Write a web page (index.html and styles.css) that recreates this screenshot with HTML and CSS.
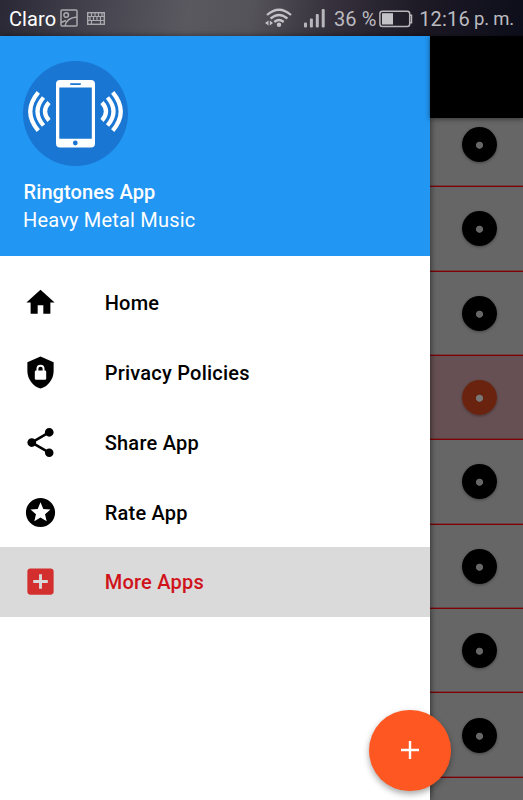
FILE: index.html
```html
<!DOCTYPE html>
<html lang="es">
<head>
<meta charset="utf-8">
<title>Ringtones App</title>
<link rel="stylesheet" href="styles.css">
</head>
<body>
<div class="phone">
  <header class="status">
    <span class="carrier">Claro</span>
    <svg class="ic-image" width="18" height="18" viewBox="0 0 18 18" fill="none" stroke="#aaa9ad" stroke-width="1.500"><rect x="1" y="1" width="16" height="16" rx="1"/><circle cx="6.200" cy="6" r="2.300"/><path d="M5 17C6 11.500 10 8.500 17 8M1 13.500l5-2"/></svg>
    <svg class="ic-keys" width="18" height="13" viewBox="0 0 18 13"><rect x=".7" y=".7" width="16.600" height="11.600" fill="none" stroke="#aaa9ad" stroke-width="1.400"/><path d="M4.500 1v3M8 1v3M11.500 1v3M15 1v3M3 4.500v3.500M6.500 4.500v3.500M10 4.500v3.500M13.500 4.500v3.500M4.500 8.500V12M13.500 8.500V12" stroke="#aaa9ad" stroke-width="1.200"/><path d="M1 4.500h16M1 8.500h16" stroke="#aaa9ad" stroke-width="1.100"/></svg>
    <svg class="ic-wifi" width="28" height="20" viewBox="0 0 28 20"><g fill="none" stroke="#c3c2c7" stroke-width="2.300"><path d="M3 7Q15 -3.500 27 7"/><path d="M6.600 10.500Q15 3.500 23.400 10.500"/><path d="M10.300 14Q15 10 19.700 14"/></g><circle cx="15" cy="16.700" r="2.200" fill="#c3c2c7"/><path d="M4.500 12.500v5L1 15zM5.800 12.500v5l3.200-2.500z" fill="#c3c2c7"/></svg>
    <svg class="ic-signal" width="21" height="19" viewBox="0 0 21 19" fill="#b7b6bb"><rect x="0" y="13.500" width="3" height="5" rx="1"/><rect x="5.900" y="9.500" width="3" height="9" rx="1"/><rect x="11.800" y="5" width="3" height="13.500" rx="1"/><rect x="17.700" y="0" width="3" height="18.500" rx="1"/></svg>
    <span class="percent">36 %</span>
    <svg class="ic-battery" width="34" height="18" viewBox="0 0 34 18"><rect x=".9" y="1.200" width="29.800" height="15.300" rx="2.500" fill="none" stroke="#b7b6bb" stroke-width="1.500"/><rect x="3" y="3.200" width="11" height="11.300" fill="#c3c2c7"/><path d="M31 5.200h1.500v7.500H31" fill="none" stroke="#b7b6bb" stroke-width="1.500"/></svg>
    <span class="clock">12:16</span><span class="ampm">p. m.</span>
  </header>
  <div class="body">
    <nav class="drawer">
      <div class="profile">
        <svg class="logo" width="105" height="105" viewBox="0 0 105 105"><circle cx="52.500" cy="52.500" r="52.500" fill="#1976d2"/><path fill="#fff" fill-rule="evenodd" d="M37 19h31q4 0 4 4v59.500q0 4-4 4H37q-4 0-4-4V23q0-4 4-4zM36.300 26.500v51.300h32.500V26.500z"/><rect x="47" y="22.200" width="11" height="1.700" rx=".8" fill="#1976d2"/><circle cx="52.300" cy="82" r="2.400" fill="#1976d2"/><g fill="none" stroke="#fff" stroke-width="4.200"><path d="M26 41.500Q18 50.500 26 59.500M20.500 36.500Q8.500 50.500 20.500 64.500M15.300 31.300Q-.8 50.500 15.300 69.700"/><path d="M79 41.500Q87 50.500 79 59.500M84.500 36.500Q96.500 50.500 84.500 64.500M89.700 31.300Q105.800 50.500 89.700 69.700"/></g></svg>
        <div class="app-name">Ringtones App</div>
        <div class="app-sub">Heavy Metal Music</div>
      </div>
      <ul class="menu">
        <li class="item"><svg viewBox="-.4 -.4 24.800 24.800"><path d="M10 20v-6h4v6h5v-8h3L12 3 2 12h3v8z"/></svg><span>Home</span></li>
        <li class="item"><svg viewBox="0 0 24 24"><path d="M12 1L3 5v6c0 5.550 3.840 10.740 9 12 5.160-1.260 9-6.450 9-12V5l-9-4z"/><rect x="8.100" y="10.600" width="7.800" height="6.400" rx=".9" fill="#fff"/><path d="M9.900 11V9.500a2.100 2.100 0 0 1 4.200 0V11" fill="none" stroke="#fff" stroke-width="1.300"/></svg><span>Privacy Policies</span></li>
        <li class="item"><svg viewBox="0 0 24 24"><path d="M18 16.080c-.76 0-1.440.3-1.960.77L8.910 12.700c.05-.23.09-.46.09-.7s-.04-.47-.09-.7l7.050-4.110c.54.5 1.250.81 2.040.81 1.660 0 3-1.340 3-3s-1.340-3-3-3-3 1.340-3 3c0 .24.04.47.09.7L8.040 9.810C7.500 9.310 6.790 9 6 9c-1.660 0-3 1.340-3 3s1.340 3 3 3c.79 0 1.500-.31 2.040-.81l7.120 4.160c-.05.21-.08.43-.08.65 0 1.610 1.310 2.920 2.920 2.920s2.920-1.310 2.920-2.920-1.310-2.920-2.920-2.920z"/></svg><span>Share App</span></li>
        <li class="item"><svg viewBox="0 0 24 24"><path d="M11.990 2C6.470 2 2 6.480 2 12s4.470 10 9.990 10C17.520 22 22 17.520 22 12S17.520 2 11.990 2zm4.240 16L12 15.450 7.770 18l1.120-4.810-3.730-3.230 4.920-.42L12 5l1.920 4.530 4.920.42-3.730 3.230L16.230 18z"/></svg><span>Rate App</span></li>
        <li class="item selected"><svg viewBox="0 0 24 24"><path d="M19 3H5c-1.110 0-2 .9-2 2v14c0 1.100.89 2 2 2h14c1.100 0 2-.9 2-2V5c0-1.100-.9-2-2-2zm-2 10h-4v4h-2v-4H7v-2h4V7h2v4h4v2z"/></svg><span>More Apps</span></li>
      </ul>
    </nav>
    <main class="tones">
      <div class="appbar"></div>
      <div class="list">
        <div class="row first"><i class="disc"></i></div>
        <div class="row"><i class="disc"></i></div>
        <div class="row"><i class="disc"></i></div>
        <div class="row playing"><i class="disc"></i></div>
        <div class="row"><i class="disc"></i></div>
        <div class="row"><i class="disc"></i></div>
        <div class="row"><i class="disc"></i></div>
        <div class="row"><i class="disc"></i></div>
      </div>
    </main>
  </div>
  <button class="fab" aria-label="+"><svg width="18" height="18" viewBox="0 0 18 18"><path d="M9 0v18M0 9h18" stroke="#fff" stroke-width="2.400"/></svg></button>
</div>
</body>
</html>
```
FILE: styles.css
```css
* { box-sizing: border-box; }
body { margin: 0; font-family: Roboto, "Liberation Sans", sans-serif; }
.phone {
  position: relative;
  display: flex;
  flex-direction: column;
  width: 523px;
  height: 800px;
  overflow: hidden;
  background: #fff;
}
.status {
  display: flex;
  align-items: center;
  flex: none;
  height: 36.400px;
  padding: 2px 9px 0;
  color: #bcbbc0;
  font-size: 20px;
  white-space: nowrap;
  background: linear-gradient(100deg, #2a2834 0%, #45434e 18%, #5a5960 36%, #55535a 48%, #37323d 62%, #1d1925 80%, #0d0e1b 100%);
}
.status svg { flex: none; }
.carrier { width: 52px; color: #fff; letter-spacing: .1px; }
.ic-image { margin-top: -2px; }
.ic-keys { margin: -2px 0 0 9px; }
.ic-wifi { margin-left: 159px; margin-top: -2px; }
.ic-signal { margin-left: 12px; margin-top: -2px; }
.percent { width: 45.500px; margin-left: 9px; letter-spacing: .1px; }
.ic-battery { margin-top: -1px; }
.clock { width: 56px; margin-left: 6.500px; letter-spacing: .2px; }
.ampm { font-size: 18.500px; letter-spacing: -.2px; }

.body { display: flex; flex: 1; min-height: 0; }
.drawer {
  z-index: 1;
  width: 430px;
  background: #fff;
  box-shadow: 1px 0 6px rgba(0, 0, 0, .5);
}
.profile {
  height: 219.500px;
  padding: 24.500px 23.500px 0 23px;
  color: #fff;
  font-size: 20px;
  line-height: 28px;
  background: #2196f3;
}
.logo { display: block; margin-bottom: 12px; }
.app-name { padding-left: .5px; font-weight: 500; letter-spacing: .1px; }
.app-sub { letter-spacing: .19px; }
.menu { margin: 0; padding: 12px 0 0; list-style: none; }
.item {
  display: flex;
  align-items: center;
  height: 69.750px;
  padding-left: 23.200px;
  font-size: 20px;
  font-weight: 500;
  letter-spacing: .23px;
  color: #000;
}
.item svg { width: 35px; height: 35px; margin-right: 46.500px; }
.item span { padding-top: 1px; }
.selected { color: #d0121b; background: #dadada; }
.selected svg { fill: #d32f2f; }

.tones { display: flex; flex-direction: column; flex: 1; background: #666; }
.appbar { z-index: 1; flex: none; height: 81.500px; background: #000; box-shadow: 0 1px 5px rgba(0, 0, 0, .5); }
.list { flex: 1; overflow: hidden; }
.row {
  display: flex;
  justify-content: center;
  align-items: center;
  height: 84.360px;
  padding-left: 6px;
  border-bottom: 1px solid #7e0004;
  box-shadow: inset 0 -1px rgba(120, 0, 4, .35);
}
.first { height: 69.300px; padding-bottom: 16px; }
.playing { background: #665053; }
.disc {
  width: 35px;
  height: 35px;
  border-radius: 50%;
  background: radial-gradient(circle at 50% 52%, #666 3.200px, #000 3.900px);
  box-shadow: 0 1px 3px rgba(0, 0, 0, .35);
}
.playing .disc { background: radial-gradient(circle at 50% 52%, #777 3.200px, #69230e 3.900px); }

.fab {
  position: absolute;
  z-index: 2;
  left: 369px;
  top: 709.500px;
  display: flex;
  align-items: center;
  justify-content: center;
  width: 81.500px;
  height: 81.500px;
  padding: 0;
  border: 0;
  border-radius: 50%;
  background: #ff5722;
  box-shadow: 0 3px 6px rgba(0, 0, 0, .35);
}
```
